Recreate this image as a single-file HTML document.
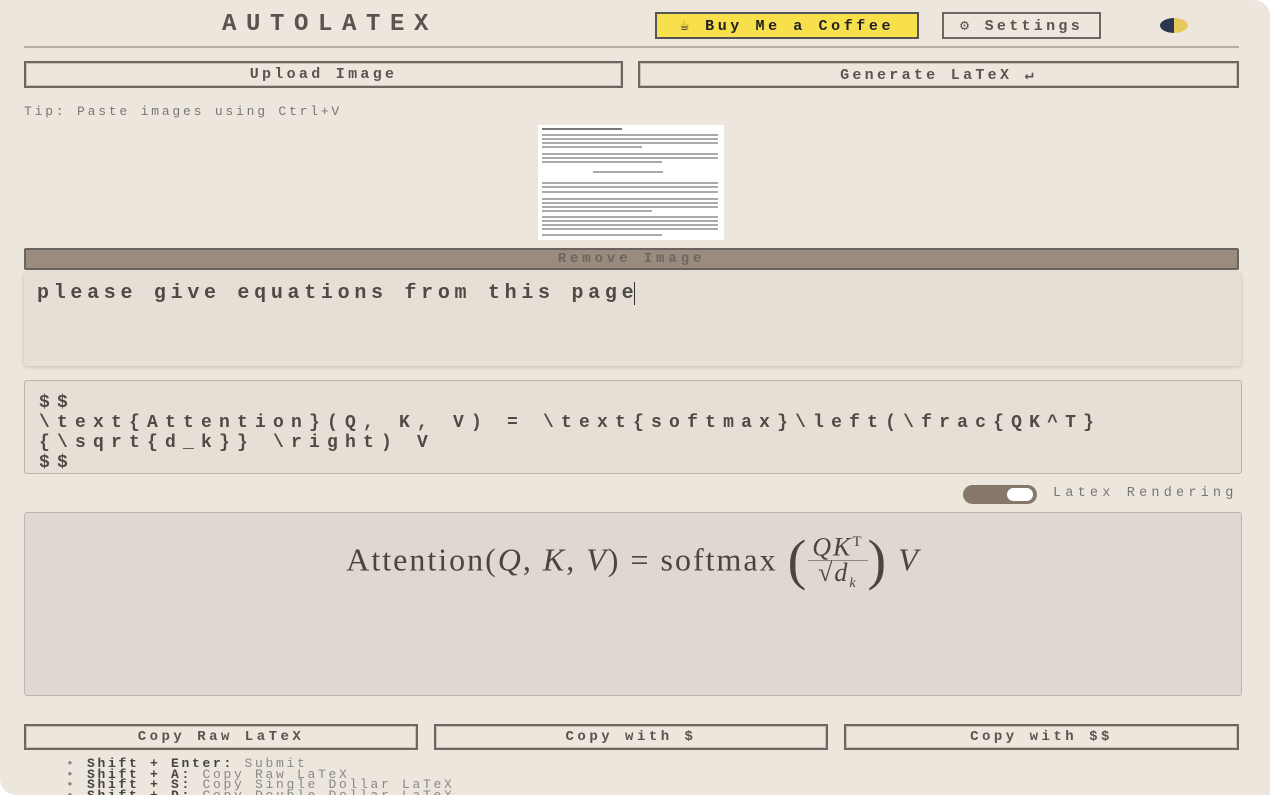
<!DOCTYPE html>
<html><head><meta charset="utf-8"><style>
*{box-sizing:border-box;margin:0;padding:0}
body{width:1280px;height:800px;background:#fff;overflow:hidden;font-family:"Liberation Mono",monospace;color:#555}
#pg{position:absolute;left:0;top:0;width:1270px;height:795px;background:#ede6dc;border-radius:0 16px 0 16px;overflow:hidden}
.a{position:absolute}
.btn{position:absolute;border:2px solid #6e6660;box-shadow:inset 0 0 0 1px #c9c0b6;background:#ede6dc;display:flex;align-items:center;justify-content:center;font-weight:bold;font-size:15px;letter-spacing:3.3px;color:#5a5450;white-space:nowrap}
.ln{position:absolute;height:2px;background:#aaa;left:4px}
</style></head><body><div id="pg">
<div class="a" style="left:0;width:650px;top:11px;text-align:center;font-family:'Liberation Mono',monospace;font-weight:bold;font-size:24px;letter-spacing:9.6px;color:#5a5450;padding-left:10px">AUTOLATEX</div>
<div class="btn" style="left:655px;top:12px;width:264px;height:27px;background:#f8df4c;color:#222;border-color:#555;box-shadow:none;letter-spacing:3.6px">☕ Buy Me a Coffee</div>
<div class="btn" style="left:942px;top:12px;width:159px;height:27px;box-shadow:none">⚙ Settings</div>
<div class="a" style="left:1160px;top:18px;width:28px;height:15px;border-radius:50%;background:linear-gradient(90deg,#2b3550 50%,#e7c95a 50%)"></div>
<div class="a" style="left:24px;top:46px;width:1215px;height:2px;background:#b8ada3"></div>
<div class="btn" style="left:24px;top:61px;width:599px;height:27px">Upload Image</div>
<div class="btn" style="left:638px;top:61px;width:601px;height:27px">Generate LaTeX ↵</div>
<div class="a" style="left:24px;top:104px;font-size:13px;letter-spacing:2.8px;color:#777;white-space:nowrap">Tip: Paste images using Ctrl+V</div>
<div class="a" style="left:538px;top:125px;width:186px;height:115px;background:#fff">
<div class="ln" style="top:3px;width:80px;background:#777"></div>
<div class="ln" style="top:9px;width:176px"></div><div class="ln" style="top:13px;width:176px"></div><div class="ln" style="top:17px;width:176px"></div><div class="ln" style="top:21px;width:100px"></div>
<div class="ln" style="top:28px;width:176px"></div><div class="ln" style="top:32px;width:176px"></div><div class="ln" style="top:36px;width:120px"></div>
<div class="ln" style="left:55px;top:46px;width:70px"></div>
<div class="ln" style="top:57px;width:176px"></div><div class="ln" style="top:61px;width:176px"></div><div class="ln" style="top:66px;width:176px"></div><div class="ln" style="top:73px;width:176px"></div><div class="ln" style="top:77px;width:176px"></div><div class="ln" style="top:81px;width:176px"></div><div class="ln" style="top:85px;width:110px"></div>
<div class="ln" style="top:91px;width:176px"></div><div class="ln" style="top:95px;width:176px"></div><div class="ln" style="top:99px;width:176px"></div><div class="ln" style="top:103px;width:176px"></div><div class="ln" style="top:109px;width:120px"></div>
</div>
<div class="a" style="left:24px;top:248px;width:1215px;height:22px;background:#998b7e;border:2px solid #6a625c;border-radius:2px;text-align:center;font-size:14px;font-weight:bold;letter-spacing:3.9px;color:#6e655e;line-height:18px">Remove Image</div>
<div class="a" style="left:24px;top:272px;width:1217px;height:94px;background:#e6dfd5;border-radius:3px;box-shadow:0 1px 4px rgba(0,0,0,.18);padding:10px 13px;font-size:20px;font-weight:bold;letter-spacing:4.7px;color:#4f4a46;white-space:nowrap">please give equations from this page<span style="border-left:1px solid #333;margin-left:-4px"></span></div>
<div class="a" style="left:24px;top:380px;width:1218px;height:94px;background:#e6dfd5;border:1px solid #bdb3a8;border-radius:3px;padding:12px 14px;font-size:18px;font-weight:bold;line-height:20px;letter-spacing:7.2px;color:#4f4a46;white-space:pre">$$
\text{Attention}(Q, K, V) = \text{softmax}\left(\frac{QK^T}
{\sqrt{d_k}} \right) V
$$</div>
<div class="a" style="left:963px;top:485px;width:74px;height:19px;border-radius:10px;background:#85786b"><div class="a" style="left:44px;top:3px;width:26px;height:13px;border-radius:7px;background:#fff"></div></div>
<div class="a" style="left:1053px;top:486px;font-size:13.5px;letter-spacing:4.2px;color:#777;white-space:nowrap">Latex Rendering</div>
<div class="a" style="left:24px;top:512px;width:1218px;height:184px;background:#dfd7d1;border:1px solid #c0b6ab;border-radius:3px"></div>
<div class="a" style="left:0;width:1266px;top:530px;text-align:center;font-family:'Liberation Serif',serif;font-size:32px;letter-spacing:2px;color:#4a4541;line-height:56px;white-space:nowrap">Attention(<i>Q</i>, <i>K</i>, <i>V</i>) = softmax <span style="font-size:56px;vertical-align:-8px;font-weight:100">(</span><span style="display:inline-block;vertical-align:middle;text-align:center;line-height:24px;font-size:26px"><span style="display:block;border-bottom:1px solid #888;padding:0 4px"><i>QK</i><sup style="font-size:15px">T</sup></span><span style="display:block">√<i>d</i><sub style="font-size:14px"><i>k</i></sub></span></span><span style="font-size:56px;vertical-align:-8px">)</span> <i>V</i></div>
<div class="btn" style="left:24px;top:724px;width:394px;height:26px;font-size:14px;letter-spacing:3.5px">Copy Raw LaTeX</div>
<div class="btn" style="left:434px;top:724px;width:394px;height:26px;font-size:14px;letter-spacing:3.5px">Copy with $</div>
<div class="btn" style="left:844px;top:724px;width:395px;height:26px;font-size:14px;letter-spacing:3.5px">Copy with $$</div>
<div class="a" style="left:66px;top:759px;font-size:13px;line-height:10.5px;letter-spacing:2.7px;color:#888;white-space:pre">• <b style="color:#444">Shift + Enter:</b> Submit
• <b style="color:#444">Shift + A:</b> Copy Raw LaTeX
• <b style="color:#444">Shift + S:</b> Copy Single Dollar LaTeX
• <b style="color:#444">Shift + D:</b> Copy Double Dollar LaTeX</div>
</div></body></html>
